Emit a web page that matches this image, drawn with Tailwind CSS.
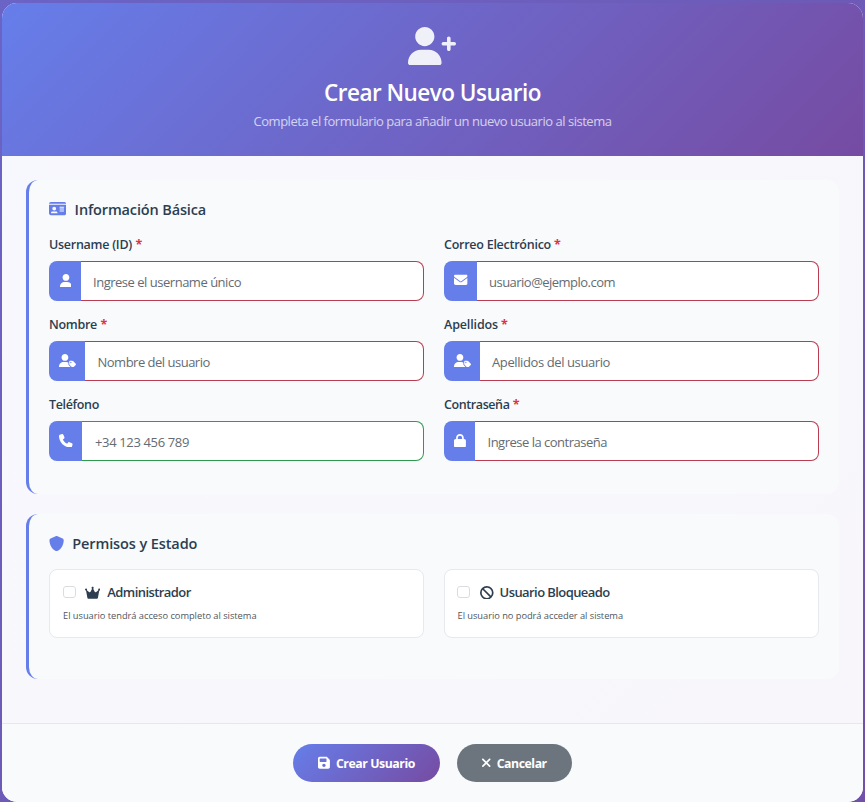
<!DOCTYPE html>
<html lang="es">
<head>
<meta charset="utf-8">
<title>Crear Nuevo Usuario</title>
<script src="https://cdn.jsdelivr.net/npm/@tailwindcss/browser@4"></script>
</head>
<body class="h-[802px] overflow-hidden bg-linear-to-br from-[#6a64c6] to-[#7050a8] px-[2px] pt-[3px] font-['Open_Sans',sans-serif] text-[#2c3e50]">
<svg class="hidden">
<symbol id="user" viewBox="0 0 448 512"><path d="M224 256c70.7 0 128-57.31 128-128s-57.3-128-128-128C153.3 0 96 57.31 96 128S153.3 256 224 256zM274.7 304H173.3C77.61 304 0 381.7 0 477.4C0 496.5 15.52 512 34.66 512h378.7C432.5 512 448 496.5 448 477.4C448 381.7 370.4 304 274.7 304z"/></symbol>
<symbol id="mail" viewBox="0 0 512 512"><path d="M48 64C21.5 64 0 85.5 0 112c0 15.1 7.1 29.3 19.2 38.4L236.8 313.6c11.4 8.5 27 8.5 38.4 0L492.8 150.4c12.1-9.1 19.2-23.3 19.2-38.4c0-26.5-21.5-48-48-48H48zM0 176V384c0 35.3 28.7 64 64 64H448c35.3 0 64-28.7 64-64V176L294.4 339.2c-22.8 17.1-54 17.1-76.8 0L0 176z"/></symbol>
<symbol id="tag" viewBox="0 0 640 512"><path d="M351.8 367.3v-44.1C328.5 310.7 302.4 304 274.7 304H173.3C77.61 304 0 381.7 0 477.4C0 496.5 15.52 512 34.66 512h378.7c11.86 0 21.82-6.337 28.07-15.43l-61.65-61.67C361.7 416.9 351.8 392.9 351.8 367.3zM224 256c70.7 0 128-57.31 128-128S294.7 0 224 0C153.3 0 96 57.31 96 128S153.3 256 224 256zM630.6 364.8L540.3 274.8C528.3 262.8 512 256 495 256h-79.23c-17.75 0-31.99 14.25-31.99 32l.0147 79.2c0 17 6.647 33.15 18.65 45.15l90.31 90.27c12.5 12.5 32.74 12.5 45.24 0l92.49-92.5C643.1 397.6 643.1 377.3 630.6 364.8zM447.8 343.9c-13.25 0-24-10.62-24-24c0-13.25 10.75-24 24-24c13.38 0 24 10.75 24 24S461.1 343.9 447.8 343.9z"/></symbol>
</svg>
<main class="flex h-[799px] flex-col overflow-hidden rounded-[15px] bg-white">
<header class="flex h-[153px] shrink-0 flex-col items-center bg-linear-[135deg] from-[#667eea] to-[#764ba2] pt-[23.5px] text-white">
<svg class="mr-px h-[38.4px] w-12 shrink-0 fill-current opacity-90" viewBox="0 0 640 512"><path d="M224 256c70.7 0 128-57.31 128-128s-57.3-128-128-128C153.3 0 96 57.31 96 128S153.3 256 224 256zM274.7 304H173.3C77.61 304 0 381.7 0 477.4C0 496.5 15.52 512 34.66 512h378.7C432.5 512 448 496.5 448 477.4C448 381.7 370.4 304 274.7 304zM616 200h-48v-48C568 138.8 557.3 128 544 128s-24 10.75-24 24v48h-48C458.8 200 448 210.8 448 224s10.75 24 24 24h48v48C520 309.3 530.8 320 544 320s24-10.75 24-24v-48h48C629.3 248 640 237.3 640 224S629.3 200 616 200z"/></svg>
<h1 class="mt-[12px] text-[22.5px] leading-8 font-semibold tracking-[-0.513px] whitespace-nowrap">Crear Nuevo Usuario</h1>
<p class="mt-[2px] text-[13px] leading-5 tracking-[-0.471px] whitespace-nowrap opacity-70">Completa el formulario para añadir un nuevo usuario al sistema</p>
</header>
<div class="h-[567px] shrink-0 bg-linear-[135deg] from-[#f7f8fe] to-[#f8f6fa] p-6">
<section class="h-[314px] w-[813px] rounded-[12px] border-l-3 border-[#667eea] bg-[#f8fafc] px-5 pt-5">
<h2 class="flex h-5 items-center gap-[8.5px] text-[14.5px] font-semibold tracking-[-0.14px] whitespace-nowrap"><svg class="mb-[2px] h-[15.2px] w-[17.1px] fill-[#667eea]" viewBox="0 0 576 512"><path d="M0 96l576 0c0-35.3-28.7-64-64-64H64C28.7 32 0 60.7 0 96zm0 32V416c0 35.3 28.7 64 64 64H512c35.3 0 64-28.7 64-64V128H0zM64 405.3c0-29.5 23.9-53.3 53.3-53.3H234.7c29.5 0 53.3 23.9 53.3 53.3c0 5.9-4.8 10.7-10.7 10.7H74.7c-5.9 0-10.7-4.8-10.7-10.7zM176 192a64 64 0 1 1 0 128 64 64 0 1 1 0-128zm176 16c0-8.8 7.2-16 16-16H496c8.8 0 16 7.2 16 16s-7.2 16-16 16H368c-8.8 0-16-7.2-16-16zm0 64c0-8.8 7.2-16 16-16H496c8.8 0 16 7.2 16 16s-7.2 16-16 16H368c-8.8 0-16-7.2-16-16zm0 64c0-8.8 7.2-16 16-16H496c8.8 0 16 7.2 16 16s-7.2 16-16 16H368c-8.8 0-16-7.2-16-16z"/></svg>Información Básica</h2>
<div class="mt-[14px] grid w-[770px] grid-cols-2 gap-x-5 whitespace-nowrap">
<div class="h-20">
<label class="block h-[27px] pt-px text-[12.5px] leading-5 font-semibold tracking-[-0.264px]">Username (ID) <span class="ml-[0.5px] font-bold text-[#dc3545]">*</span></label>
<div class="flex h-10"><span class="flex w-8 items-center justify-center rounded-l-[8px] bg-[#667eea] pb-px pl-px"><svg class="h-[13.6px] w-[11.9px] fill-white"><use href="#user"/></svg></span><div class="flex flex-1 items-center rounded-r-[8px] border border-l-0 border-[#b93c50] bg-white pt-1 pl-3 text-[13px] tracking-[-0.483px] text-[#646b72]">Ingrese el username único</div></div>
</div>
<div class="h-20">
<label class="block h-[27px] pt-px text-[12.5px] leading-5 font-semibold tracking-[-0.252px]">Correo Electrónico <span class="font-bold text-[#dc3545]">*</span></label>
<div class="flex h-10"><span class="flex w-[33px] items-center justify-center rounded-l-[8px] bg-[#667eea] pb-[2px] pl-px"><svg class="h-[13.6px] w-[13.6px] fill-white"><use href="#mail"/></svg></span><div class="flex flex-1 items-center rounded-r-[8px] border border-l-0 border-[#b93c50] bg-white pt-1 pl-3 text-[13px] tracking-[-0.521px] text-[#646b72]">usuario@ejemplo.com</div></div>
</div>
<div class="h-20">
<label class="block h-[27px] pt-px text-[12.5px] leading-5 font-semibold tracking-[-0.289px]">Nombre <span class="ml-[0.5px] font-bold text-[#dc3545]">*</span></label>
<div class="flex h-10"><span class="flex w-9 items-center justify-center rounded-l-[8px] bg-[#667eea] pb-px pl-px"><svg class="h-[13.6px] w-[17px] fill-white"><use href="#tag"/></svg></span><div class="flex flex-1 items-center rounded-r-[8px] border border-l-0 border-[#b93c50] bg-white pt-1 pl-[12.5px] text-[13px] tracking-[-0.5px] text-[#646b72]">Nombre del usuario</div></div>
</div>
<div class="h-20">
<label class="block h-[27px] pt-px text-[12.5px] leading-5 font-semibold tracking-[-0.134px]">Apellidos <span class="font-bold text-[#dc3545]">*</span></label>
<div class="flex h-10"><span class="flex w-9 items-center justify-center rounded-l-[8px] bg-[#667eea] pb-px pl-px"><svg class="h-[13.6px] w-[17px] fill-white"><use href="#tag"/></svg></span><div class="flex flex-1 items-center rounded-r-[8px] border border-l-0 border-[#b93c50] bg-white pt-1 pl-3 text-[13px] tracking-[-0.398px] text-[#646b72]">Apellidos del usuario</div></div>
</div>
<div class="h-20">
<label class="block h-[27px] pt-px text-[12.5px] leading-5 font-semibold tracking-[-0.336px]">Teléfono</label>
<div class="flex h-10"><span class="flex w-[33px] items-center justify-center rounded-l-[8px] bg-[#667eea] pb-px pl-px"><svg class="h-[13.6px] w-[13.6px] fill-white" viewBox="0 0 512 512"><path d="M164.9 24.6c-7.7-18.6-28-28.5-47.4-23.2l-88 24C12.1 30.2 0 46 0 64C0 311.4 200.6 512 448 512c18 0 33.8-12.1 38.6-29.5l24-88c5.3-19.4-4.6-39.7-23.2-47.4l-96-40c-16.3-6.8-35.2-2.1-46.3 11.6L304.7 368C234.3 334.7 177.3 277.7 144 207.3L193.3 167c13.7-11.2 18.4-30 11.6-46.3l-40-96z"/></svg></span><div class="flex flex-1 items-center rounded-r-[8px] border border-l-0 border-[#2f9a4f] bg-white pt-1 pl-[13px] text-[13px] tracking-[-0.355px] text-[#646b72]">+34 123 456 789</div></div>
</div>
<div class="h-20">
<label class="block h-[27px] pt-px text-[12.5px] leading-5 font-semibold tracking-[-0.406px]">Contraseña <span class="ml-[0.5px] font-bold text-[#dc3545]">*</span></label>
<div class="flex h-10"><span class="flex w-[31px] items-center justify-center rounded-l-[8px] bg-[#667eea] pb-px pl-px"><svg class="h-[13.6px] w-[11.9px] fill-white" viewBox="0 0 448 512"><path d="M144 144v48H304V144c0-44.2-35.8-80-80-80s-80 35.8-80 80zM80 192V144C80 64.5 144.5 0 224 0s144 64.5 144 144v48h16c35.3 0 64 28.7 64 64V448c0 35.3-28.7 64-64 64H64c-35.3 0-64-28.7-64-64V256c0-35.3 28.7-64 64-64H80z"/></svg></span><div class="flex flex-1 items-center rounded-r-[8px] border border-l-0 border-[#b93c50] bg-white pt-1 pl-[12.5px] text-[13px] tracking-[-0.5px] text-[#646b72]">Ingrese la contraseña</div></div>
</div>
</div>
</section>
<section class="mt-5 h-[165px] w-[813px] rounded-[12px] border-l-3 border-[#667eea] bg-[#f8fafc] px-5 pt-5">
<h2 class="flex h-5 items-center gap-2 text-[14.5px] font-semibold tracking-[-0.1px] whitespace-nowrap"><svg class="mb-px h-[15.2px] w-[15.2px] fill-[#667eea]" viewBox="0 0 512 512"><path d="M256 0c4.6 0 9.2 1 13.4 2.9L457.7 82.8c22 9.3 38.4 31 38.3 57.2c-.5 99.2-41.3 280.7-213.6 363.2c-16.7 8-36.1 8-52.8 0C57.3 420.7 16.5 239.2 16 140c-.1-26.2 16.3-47.9 38.3-57.2L242.7 2.9C246.8 1 251.4 0 256 0z"/></svg>Permisos y Estado</h2>
<div class="mt-[15px] grid w-[770px] grid-cols-2 gap-x-5 whitespace-nowrap">
<div class="h-[69px] rounded-[8px] border border-[#e6eaee] bg-white px-[13px] pt-[13px]">
<div class="flex h-5 items-center text-[13px] font-semibold tracking-[-0.567px]"><span class="mb-[2px] h-3 w-[13px] rounded-[3px] border border-[#d9dde2] bg-white"></span><svg class="mr-[7px] ml-[9px] mb-px h-[13.6px] w-[15.3px] fill-current" viewBox="0 0 576 512"><path d="M576 136c0 22.09-17.91 40-40 40c-.248 0-.4551-.1266-.7031-.1305l-50.52 277.9C482 468.9 468.8 480 453.3 480H122.7c-15.46 0-28.72-11.06-31.48-26.27L40.71 175.9C40.46 175.9 40.25 176 39.1 176c-22.09 0-40-17.91-40-40S17.91 96 39.1 96s40 17.91 40 40c0 8.998-3.521 16.89-8.537 23.57l89.63 71.7c15.91 12.73 39.5 7.544 48.61-10.68l57.6-115.2C255.1 98.34 247.1 86.34 247.1 72C247.1 49.91 265.9 32 288 32s39.1 17.91 39.1 40c0 14.34-7.963 26.34-19.3 33.4l57.6 115.2c9.111 18.22 32.71 23.4 48.61 10.68l89.63-71.7C499.5 152.9 496 144.1 496 136C496 113.9 513.9 96 536 96S576 113.9 576 136z"/></svg>Administrador</div>
<p class="mt-[5px] text-[9.3px] leading-4 tracking-[-0.029px] text-[#4f565d]">El usuario tendrá acceso completo al sistema</p>
</div>
<div class="h-[69px] rounded-[8px] border border-[#e6eaee] bg-white pt-[13px] pr-[13px] pl-3">
<div class="flex h-5 items-center text-[13px] font-semibold tracking-[-0.581px]"><span class="mb-[2px] h-3 w-[13px] rounded-[3px] border border-[#d9dde2] bg-white"></span><svg class="mr-[6px] ml-[10px] mb-px h-[13.6px] w-[13.6px] fill-current" viewBox="0 0 512 512"><path d="M367.2 412.5L99.5 144.8C77.1 176.1 64 214.5 64 256c0 106 86 192 192 192c41.5 0 79.9-13.1 111.2-35.5zm45.3-45.3C434.9 335.9 448 297.5 448 256c0-106-86-192-192-192c-41.5 0-79.9 13.1-111.2 35.5L412.5 367.2zM0 256a256 256 0 1 1 512 0A256 256 0 1 1 0 256z"/></svg>Usuario Bloqueado</div>
<p class="mt-[5px] ml-[0.5px] text-[9.3px] leading-4 tracking-[-0.039px] text-[#4f565d]">El usuario no podrá acceder al sistema</p>
</div>
</div>
</section>
</div>
<footer class="flex flex-1 items-start justify-center gap-[17px] border-t border-[#e4e7ec] bg-[#f8fafc] pt-5 text-[12.3px] font-bold whitespace-nowrap text-white">
<button class="flex h-[38px] w-[147px] items-center justify-center gap-[6px] rounded-full bg-linear-[135deg] from-[#667eea] to-[#764ba2] pt-px tracking-[-0.444px]"><svg class="mb-px h-[13.6px] w-[11.9px] fill-current" viewBox="0 0 448 512"><path d="M433.1 129.1l-83.9-83.9C342.3 38.32 327.1 32 316.1 32H64C28.65 32 0 60.65 0 96v320c0 35.35 28.65 64 64 64h320c35.35 0 64-28.65 64-64V163.9C448 152.9 441.7 137.7 433.1 129.1zM224 416c-35.34 0-64-28.66-64-64s28.66-64 64-64s64 28.66 64 64S259.3 416 224 416zM320 208C320 216.8 312.8 224 304 224h-224C71.16 224 64 216.8 64 208v-96C64 103.2 71.16 96 80 96h224C312.8 96 320 103.2 320 112V208z"/></svg><span class="pt-px">Crear Usuario</span></button>
<button class="flex h-[38px] w-[115px] items-center justify-center gap-[6px] rounded-full bg-[#6c757d] pt-px tracking-[-0.463px]"><svg class="mb-px h-[13.6px] w-[8.5px] fill-current" viewBox="0 0 320 512"><path d="M310.6 361.4c12.5 12.5 12.5 32.75 0 45.25C304.4 412.9 296.2 416 288 416s-16.38-3.125-22.62-9.375L160 301.3L54.63 406.6C48.38 412.9 40.19 416 32 416S15.63 412.9 9.375 406.6c-12.5-12.5-12.5-32.75 0-45.25l105.4-105.4L9.375 150.6c-12.5-12.5-12.5-32.75 0-45.25s32.75-12.5 45.25 0L160 210.8l105.4-105.4c12.5-12.5 32.75-12.5 45.25 0s12.5 32.75 0 45.25l-105.4 105.4L310.6 361.4z"/></svg><span class="pt-px">Cancelar</span></button>
</footer>
</main>
</body>
</html>
